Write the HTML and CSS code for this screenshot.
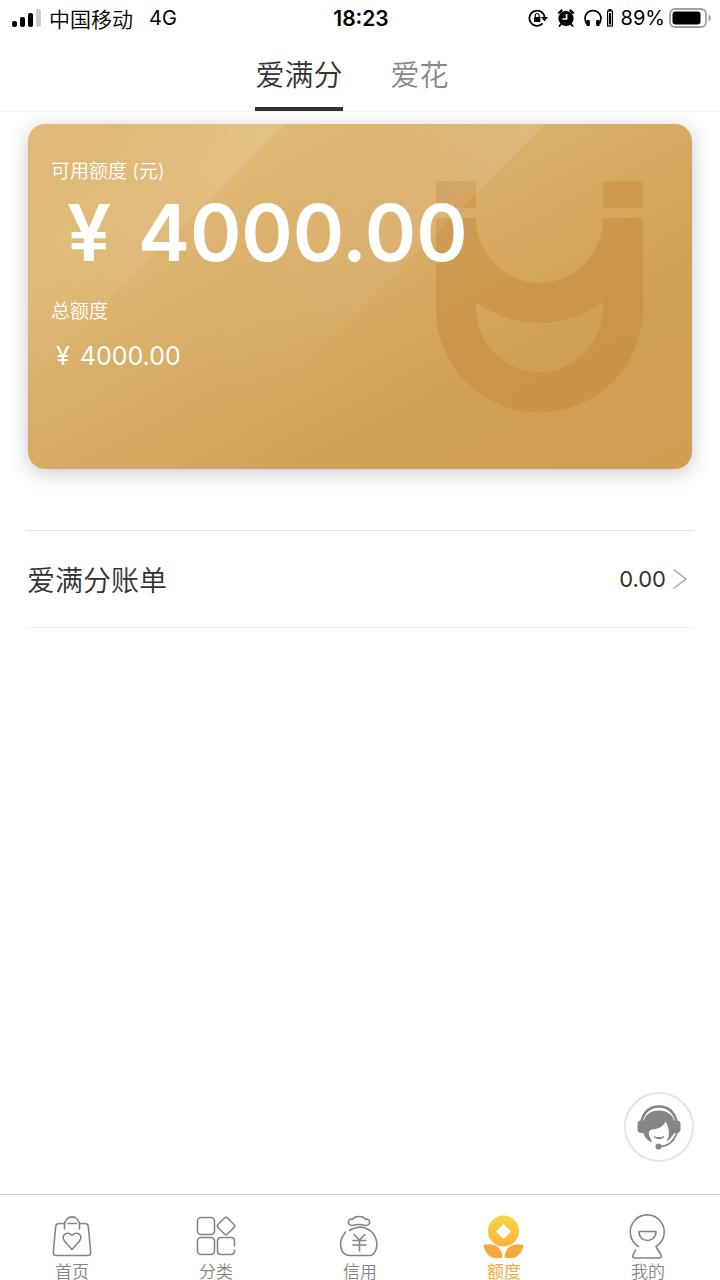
FILE: index.html
```html
<!DOCTYPE html>
<html lang="zh-CN">
<head>
<meta charset="utf-8">
<meta name="viewport" content="width=device-width, initial-scale=1">
<title>额度</title>
<link rel="stylesheet" href="styles.css">
</head>
<body>
<div class="app">
  <header class="status">
    <div class="status-left">
      <svg class="signal" width="32" height="20" viewBox="0 0 32 20" aria-hidden="true">
        <rect x="1" y="13" width="5" height="6" rx="2"/>
        <rect x="9" y="9" width="5" height="10" rx="2"/>
        <rect x="17" y="5" width="5" height="14" rx="2"/>
        <rect x="25" y="1" width="5" height="18" rx="2" fill="#ccc"/>
      </svg>
      <span>中国移动</span>
      <span class="network">4G</span>
    </div>
    <time class="clock">18:23</time>
    <div class="status-right">
      <svg width="20" height="20" viewBox="0 0 20 20" aria-hidden="true">
        <path d="M14.6 15.4A7.6 7.6 0 1 1 16.6 9.6" fill="none" stroke="#000" stroke-width="1.8"/>
        <path d="M13 9h7l-3.5 4.4z"/>
        <rect x="6" y="9" width="6.4" height="5" rx=".6"/>
        <path d="M7.3 9V7.4a1.9 1.9 0 0 1 3.8 0V9" fill="none" stroke="#000" stroke-width="1.2"/>
      </svg>
      <svg class="alarm" width="18" height="20" viewBox="0 0 18 20" aria-hidden="true">
        <circle cx="9" cy="10.5" r="7.6"/>
        <path d="M2 4.800 4.500 2.600M16 4.800 13.500 2.600" stroke="#000" stroke-width="2.400" stroke-linecap="round"/>
        <path d="M4 16l-1.500 2M14 16l1.500 2" stroke="#000" stroke-width="2" stroke-linecap="round"/>
        <path d="M9.600 6v5H5.400" fill="none" stroke="#fff" stroke-width="1.600"/>
      </svg>
      <svg class="phones" width="18" height="20" viewBox="0 0 18 20" aria-hidden="true">
        <path d="M2.500 15.500C-1.500 7.500 4 2.600 9 2.600S19.500 7.500 15.500 15.500" fill="none" stroke="#000" stroke-width="1.700"/>
        <rect x="2.300" y="12" width="3.600" height="6" rx="1"/>
        <rect x="12.100" y="12" width="3.600" height="6" rx="1"/>
      </svg>
      <svg class="cell" width="8" height="20" viewBox="0 0 8 20" aria-hidden="true">
        <rect x="1.600" y="3" width="4.800" height="15" fill="none" stroke="#000" stroke-width="1.200"/>
        <path d="M2.500 1h3v2h-3zM3 5h2v11.500H3z"/>
      </svg>
      <span class="percent">89%</span>
      <svg class="battery" width="42" height="20" viewBox="0 0 42 20" aria-hidden="true">
        <rect x="1" y="1" width="36" height="18" rx="5" fill="none" stroke="#a0a0a0" stroke-width="1.800"/>
        <rect x="3.500" y="3.500" width="28" height="13" rx="3"/>
        <path d="M39.500 6.500c3 1.500 3 5.500 0 7z" fill="#a0a0a0"/>
      </svg>
    </div>
  </header>

  <nav class="tabs" aria-label="账户">
    <button class="tab tab-active" type="button">爱满分</button>
    <button class="tab" type="button">爱花</button>
  </nav>

  <main class="content">
    <section class="card">
      <svg class="card-art" viewBox="0 0 664 345" preserveAspectRatio="xMaxYMin slice" aria-hidden="true">
        <defs>
          <linearGradient id="shine1" gradientUnits="userSpaceOnUse" x1="257" y1="0" x2="167" y2="-90">
            <stop offset="0" stop-color="#fff" stop-opacity=".13"/>
            <stop offset="1" stop-color="#fff" stop-opacity="0"/>
          </linearGradient>
          <linearGradient id="shine2" gradientUnits="userSpaceOnUse" x1="517" y1="0" x2="427" y2="-90">
            <stop offset="0" stop-color="#fff" stop-opacity=".13"/>
            <stop offset="1" stop-color="#fff" stop-opacity="0"/>
          </linearGradient>
          <linearGradient id="fade" x1="0" y1="0" x2="0" y2="1">
            <stop offset="0" stop-color="#fff"/>
            <stop offset=".85" stop-color="#000"/>
          </linearGradient>
          <mask id="fadeMask"><rect width="664" height="345" fill="url(#fade)"/></mask>
        </defs>
        <path fill="#be7e30" fill-opacity=".34" fill-rule="evenodd" d="M408 57h40v27h-40zM575 57h40v27h-40zM408 94h40a63.500 65 0 0 0 127 0h40v91a103.500 103.500 0 0 1-207 0zM448 178v6a63.500 64 0 0 0 127 0v-6a107 107 0 0 1-127 0z"/>
        <g mask="url(#fadeMask)">
          <path fill="url(#shine1)" d="M0 0h257L0 257z"/>
          <path fill="url(#shine2)" d="M300 0h217L172 345H0V300z"/>
        </g>
      </svg>
      <h2 class="label">可用额度 (元)</h2>
      <p class="amount"><span>¥</span><span>4000.00</span></p>
      <h2 class="label">总额度</h2>
      <p class="total"><span>¥</span><span>4000.00</span></p>
    </section>

    <a class="bill" href="#bill">
      <span class="bill-name">爱满分账单</span>
      <span class="bill-value">0.00</span>
      <svg width="16" height="22" viewBox="0 0 16 22" aria-hidden="true">
        <path d="M1.500 1.500 14 11 1.500 20.500" fill="none" stroke="#aaa" stroke-width="1.500"/>
      </svg>
    </a>
  </main>

  <button class="service" type="button" aria-label="客服">
    <svg width="46" height="46" viewBox="0 0 46 46" aria-hidden="true">
      <path d="M5.500 17C8.500 6 15 2.500 23 2.500S37.500 6 40.500 17" fill="none" stroke="#858585" stroke-width="2.600"/>
      <path d="M8.500 16.500H5c-2 0-3.500 1.300-3.500 3v6c0 2 1.500 3.500 3.500 3.500h3.500zM37.500 16.500H41c2 0 3.500 1.300 3.500 3v6c0 2-1.500 3.500-3.500 3.500h-3.500z" fill="#858585"/>
      <path d="M7.500 18C9 10.500 15 6.500 23 6.500S37 10.500 38.500 18v11l-6 7.500c-1 1-2 1-1.500 0 3-5 2.500-12-1.500-19-2 5.500-8 7.500-13 8-4 .5-4.500 3-2.500 7.500l2 5.500C11.500 37 7.500 32 7.500 28z" fill="#858585"/>
      <path d="M18 32.500c3 3 7 3 10 0-2.500 1.500-7.500 1.500-10 0z" fill="#858585" stroke="#858585"/>
      <path d="M41 28c-2 8-8 14-17 14.500" fill="none" stroke="#858585" stroke-width="1.800"/>
      <circle cx="22.500" cy="42.500" r="3" fill="#858585"/>
    </svg>
  </button>

  <nav class="bottom-nav" aria-label="主导航">
    <a class="nav-item" href="#home">
      <svg class="nav-icon" viewBox="0 0 44 48" aria-hidden="true">
        <path d="M13.500 11.500H9q-3 0-3.300 3L3.300 40q-.3 3.500 3 3.500h31.400q3.300 0 3-3.500L38.300 14.500q-.3-3-3.300-3h-4.500M18 11.500h8.500M14.500 17v-3.500C14.500 2 29.500 2 29.500 13.500V17M22 37.500 14.500 29c-4.500-5.500 3-11 7.500-5.500 4.500-5.500 12 0 7.500 5.500z"/>
      </svg>
      <span>首页</span>
    </a>
    <a class="nav-item" href="#category">
      <svg class="nav-icon" viewBox="0 0 44 48" aria-hidden="true">
        <rect x="3.500" y="5.500" width="17" height="17" rx="3.500"/>
        <rect x="3.500" y="25.500" width="17" height="17" rx="3.500"/>
        <path d="M30.500 6q1.500-1.500 3 0l6.500 6.500q1.500 1.500 0 3l-6.500 6.500q-1.500 1.500-3 0l-6.500-6.500q-1.500-1.500 0-3zM40.500 34v-5q0-3.500-3.500-3.500H27q-3.500 0-3.500 3.500v10q0 3.500 3.500 3.500h10q3.500 0 3.500-3.500v-1"/>
      </svg>
      <span>分类</span>
    </a>
    <a class="nav-item" href="#credit">
      <svg class="nav-icon" viewBox="1 0 44 48" aria-hidden="true">
        <path d="M15.500 13.500C9 13.500 11 5.500 15.500 7.500c2-4 11-4 13 0 4.500-2 6.500 6 0 6q-6.500-2-13 0zM12.500 18.500C23 11.500 33.500 16.500 37.500 23.500 43 34 38 43.500 32 43.500H13C4 43.500-.5 31.500 8.500 20M17 22.500l5.500 5.500 5.500-5.500M16 28.500h13M16 33h13M22.500 28.500V39"/>
      </svg>
      <span>信用</span>
    </a>
    <a class="nav-item nav-active" href="#quota" aria-current="page">
      <svg class="nav-icon" viewBox="1 0 44 48" aria-hidden="true">
        <defs>
          <linearGradient id="gold" x1="0" y1="0" x2="0" y2="1">
            <stop offset="0" stop-color="#fbd643"/>
            <stop offset="1" stop-color="#fab33c"/>
          </linearGradient>
        </defs>
        <path stroke="none" fill="url(#gold)" fill-rule="evenodd" d="M22.500 3.500a15.500 15.500 0 1 1 0 31 15.500 15.500 0 0 1 0-31zm0 8.500-7.500 7.500 7.500 7.500 7.500-7.500z"/>
        <path stroke="none" fill="#f9a83b" d="M2.500 33C12 30.500 21 34 21.500 45.500 11 48.500 4 43 2.500 33zM42.500 33C33 30.500 24 34 23.500 45.500 34 48.500 41 43 42.500 33z"/>
      </svg>
      <span>额度</span>
    </a>
    <a class="nav-item" href="#mine">
      <svg class="nav-icon" viewBox="1 0 44 48" aria-hidden="true">
        <path d="M13.500 34.500A17 17 0 1 1 31 34.500l5 8.500q1.500 3-2 3H10.500q-3.500 0-2.500-3l2.500-5M14 19.500h17c0 12-17 12-17 0z"/>
      </svg>
      <span>我的</span>
    </a>
  </nav>
</div>
</body>
</html>
```
FILE: styles.css
```css
* {
  box-sizing: border-box;
}

body {
  margin: 0;
  background: #fff;
  color: #333;
  font-family: Inter, "Noto Sans CJK SC", sans-serif;
}

button {
  border: 0;
  padding: 0;
  background: none;
  font: inherit;
  color: inherit;
}

a {
  color: inherit;
  text-decoration: none;
}

svg {
  display: block;
  flex: none;
}

.app {
  position: relative;
  display: flex;
  flex-direction: column;
  height: 100vh;
  overflow: hidden;
}

.status {
  display: grid;
  grid-template-columns: 1fr auto 1fr;
  align-items: center;
  height: 36px;
  padding: 0 9px 0 11px;
  color: #000;
  font-size: 21px;
}

.status-left,
.status-right {
  display: flex;
  align-items: center;
}

.status-left {
  font-weight: 350;
}

.signal {
  margin-right: 6px;
}

.network {
  margin-left: 16px;
  font-size: 20px;
  font-weight: 400;
}

.clock {
  font-weight: 600;
}

.status-right {
  justify-content: flex-end;
}

.alarm,
.phones {
  margin-left: 9px;
}

.cell {
  margin-left: 4px;
}

.percent {
  margin: 0 4px 0 7px;
  font-size: 20px;
}

.tabs {
  position: relative;
  z-index: 1;
  display: flex;
  justify-content: center;
  gap: 48px;
  height: 76px;
  padding-right: 16px;
  border-bottom: 1px solid #f3f3f3;
  background: #fff;
}

.tab {
  height: 75px;
  padding-top: 2px;
  border-bottom: 4px solid transparent;
  color: #888;
  font-size: 29px;
  font-weight: 350;
}

.tab-active {
  border-color: #333;
  color: #333;
}

.content {
  flex: 1;
  padding: 12px 26px 0;
}

.card {
  position: relative;
  margin: 0 2px;
  min-height: 345px;
  padding: 34px 23px;
  overflow: hidden;
  border-radius: 17px;
  background: linear-gradient(152deg, #dfb975 0%, #dfb975 20%, #d1a057 72%, #d09d53 100%);
  box-shadow: 0 4px 20px rgba(0, 0, 0, 0.22);
  color: #fff;
}

.card-art {
  position: absolute;
  inset: 0;
  width: 100%;
  height: 100%;
}

.label,
.amount,
.total {
  position: relative;
  margin: 0;
}

.label {
  font-size: 19px;
  font-weight: 350;
  line-height: 28px;
}

.amount {
  display: flex;
  gap: 27px;
  margin-bottom: 18px;
  padding-left: 16px;
  font-size: 78px;
  font-weight: 600;
  line-height: 94px;
}

.total {
  display: flex;
  gap: 10px;
  margin-top: 12px;
  padding-left: 5px;
  font-size: 25px;
  line-height: 36px;
}

.bill {
  display: flex;
  align-items: center;
  height: 98px;
  margin-top: 61px;
  padding: 0 6px 0 1px;
  border: solid #e2e2e2;
  border-width: 1px 0;
  border-bottom-color: #efefef;
}

.bill-name {
  flex: 1;
  font-size: 28px;
  font-weight: 350;
}

.bill-value {
  margin-right: 6px;
  font-size: 22px;
}

.service {
  position: absolute;
  right: 26px;
  bottom: 118px;
  display: grid;
  place-items: center;
  width: 70px;
  height: 70px;
  border: 2px solid #e5e5e5;
  border-radius: 50%;
  background: #fff;
}

.bottom-nav {
  display: flex;
  flex: none;
  height: 86px;
  border-top: 1px solid #ccc;
  background: #fff;
}

.nav-item {
  display: flex;
  flex: 1;
  flex-direction: column;
  align-items: center;
  padding-top: 17px;
  color: #858585;
  font-size: 17px;
  font-weight: 350;
  line-height: 24px;
}

.nav-icon {
  width: 44px;
  height: 48px;
  fill: none;
  stroke: #858585;
  stroke-width: 1.6;
  stroke-linecap: round;
  stroke-linejoin: round;
}

.nav-active {
  color: #f9a83b;
  font-weight: 400;
}
```
